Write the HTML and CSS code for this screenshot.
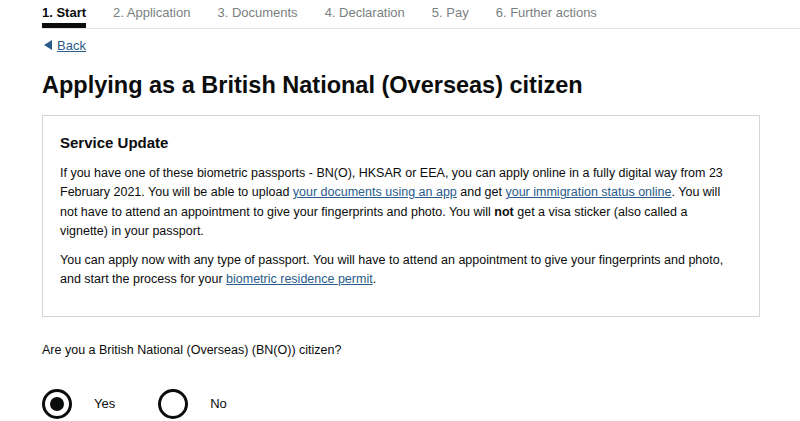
FILE: index.html
```html
<!DOCTYPE html>
<html lang="en">
<head>
<meta charset="utf-8">
<title>Applying as a British National (Overseas) citizen</title>
<link rel="stylesheet" href="styles.css">
</head>
<body>
<nav class="steps">
  <ul class="step-list">
    <li class="step step-current">1. Start</li>
    <li class="step">2. Application</li>
    <li class="step">3. Documents</li>
    <li class="step">4. Declaration</li>
    <li class="step">5. Pay</li>
    <li class="step">6. Further actions</li>
  </ul>
</nav>
<main class="main">
  <a class="back" href="#"><span class="back-arrow"></span>Back</a>
  <h1 class="title">Applying as a British National (Overseas) citizen</h1>
  <section class="notice">
    <h2 class="notice-title">Service Update</h2>
    <p class="notice-text">If you have one of these biometric passports - BN(O), HKSAR or EEA, you can apply online in a fully digital way from 23 February 2021. You will be able to upload <a href="#">your documents using an app</a> and get <a href="#">your immigration status online</a>. You will not have to attend an appointment to give your fingerprints and photo. You will <strong>not</strong> get a visa sticker (also called a vignette) in your passport.</p>
    <p class="notice-text">You can apply now with any type of passport. You will have to attend an appointment to give your fingerprints and photo, and start the process for your <a href="#">biometric residence permit</a>.</p>
  </section>
  <fieldset class="question">
    <legend class="legend">Are you a British National (Overseas) (BN(O)) citizen?</legend>
    <div class="radios">
      <label class="radio"><span class="radio-circle radio-checked"></span><span class="radio-label">Yes</span></label>
      <label class="radio"><span class="radio-circle"></span><span class="radio-label">No</span></label>
    </div>
  </fieldset>
</main>
</body>
</html>
```
FILE: styles.css
```css
* { box-sizing: border-box; }
html, body { margin: 0; padding: 0; background: #fff; }
body {
  font-family: "Liberation Sans", Arial, sans-serif;
  color: #0b0c0c;
  overflow: hidden;
}
.steps {
  padding-left: 42px;
}
.step-list {
  list-style: none;
  margin: 0;
  padding: 0;
  display: flex;
  gap: 27px;
  border-bottom: 1px solid #e3e3e3;
}
.step {
  font-size: 13px;
  color: #7a7f82;
  padding-top: 4px;
  height: 28px;
  line-height: 17px;
}
.step-current {
  color: #0b0c0c;
  font-weight: bold;
  border-bottom: 5px solid #0b0c0c;
}
.main {
  padding: 7px 42px 0 42px;
}
.back {
  display: inline-flex;
  align-items: center;
  gap: 5px;
  font-size: 13px;
  color: #2a5b8a;
  text-decoration: underline;
  margin-left: 2px;
}
.back-arrow {
  width: 0; height: 0;
  border-top: 5px solid transparent;
  border-bottom: 5px solid transparent;
  border-right: 8px solid #2a5b8a;
}
.title {
  font-size: 23.5px;
  font-weight: bold;
  margin: 16px 0 0 0;
  line-height: 30px;
}
.notice {
  margin-top: 15px;
  width: 718px;
  border: 1.5px solid #d6d6d6;
  padding: 17px 24px 26px 17px;
}
.notice-title {
  font-size: 15px;
  font-weight: bold;
  margin: 0 0 11px 0;
  line-height: 20px;
}
.notice-text {
  font-size: 12.5px;
  line-height: 19.3px;
  margin: 0 0 10px 0;
}
.notice-text:last-child { margin-bottom: 0; }
.notice-text a { color: #2a5b8a; }
.question {
  border: 0;
  margin: 24px 0 0 0;
  padding: 0;
}
.legend {
  padding: 0;
  font-size: 12.5px;
  line-height: 18px;
}
.radios {
  display: flex;
  gap: 43px;
  margin-top: 30px;
}
.radio {
  display: flex;
  align-items: center;
  gap: 22px;
  font-size: 13px;
}
.radio-circle {
  width: 30px;
  height: 30px;
  border: 3px solid #0b0c0c;
  border-radius: 50%;
  position: relative;
}
.radio-checked::after {
  content: "";
  position: absolute;
  left: 5px; top: 5px;
  width: 14px; height: 14px;
  border-radius: 50%;
  background: #0b0c0c;
}
```
